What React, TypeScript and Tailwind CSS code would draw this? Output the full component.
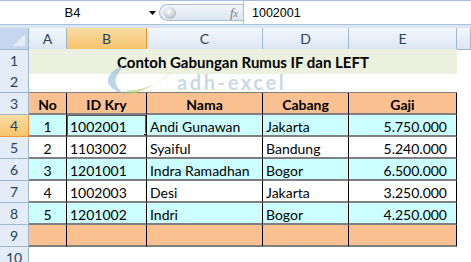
import React from 'react';

const rows = [
  { no: '1', id: '1002001', nama: 'Andi Gunawan', cabang: 'Jakarta', gaji: '5.750.000', bg: 'bg-[#ccffff]' },
  { no: '2', id: '1103002', nama: 'Syaiful', cabang: 'Bandung', gaji: '5.240.000', bg: 'bg-white' },
  { no: '3', id: '1201001', nama: 'Indra Ramadhan', cabang: 'Bogor', gaji: '6.500.000', bg: 'bg-[#ccffff]' },
  { no: '4', id: '1002003', nama: 'Desi', cabang: 'Jakarta', gaji: '3.250.000', bg: 'bg-white' },
  { no: '5', id: '1201002', nama: 'Indri', cabang: 'Bogor', gaji: '4.250.000', bg: 'bg-[#ccffff]' },
];

const gridCols = 'grid grid-cols-[29px_38px_80px_116px_86px_108px_1fr]';

function RowHead({ n, active }: { n: number; active?: boolean }) {
  return (
    <div
      className={
        active
          ? 'flex items-center justify-center border-r border-b border-[#f29536] bg-linear-to-b from-[#f9dca4] to-[#f5c46c] text-[14px] text-[#27415f]'
          : 'flex items-center justify-center border-r border-b border-[#9eb6ce] bg-[#e4ecf7] text-[14px] text-[#27415f]'
      }
    >
      {n}
    </div>
  );
}

function FormulaBar() {
  return (
    <div className="flex h-[28px] flex-col">
      <div className="flex h-[24px] border-t border-[#a9c0dc] bg-white">
        <div className="flex w-[145px] items-center justify-center pt-px font-['Liberation_Sans',sans-serif] text-[13px] text-black">
          B4
        </div>
        <div className="flex w-[14px] items-center justify-center">
          <svg width="7" height="4" viewBox="0 0 7 4">
            <path d="M0 0h7L3.5 4z" fill="#000" />
          </svg>
        </div>
        <div className="my-[3px] flex w-[84px] items-center justify-between rounded-l-full border border-r-0 border-[#a9bfd6] bg-linear-to-b from-[#f2f6fb] to-[#dbe5f1] pl-[4px] pr-[5px]">
          <div className="h-[12px] w-[12px] rounded-full bg-[radial-gradient(circle_at_40%_35%,#ffffff,#b8bec6_70%)]" />
          <span className="font-['Liberation_Serif',serif] text-[13px] italic text-[#7a7a7a]">
            f<span className="text-[10px]">x</span>
          </span>
        </div>
        <div className="flex flex-1 items-center border-l border-[#a9bfd6] pl-[8px] pt-px font-['Liberation_Sans',sans-serif] text-[12.5px] text-black">
          1002001
        </div>
      </div>
      <div className="h-[4px] border-t border-[#a9c0dc] bg-[#dbe6f4]" />
    </div>
  );
}

function ColumnHeaders() {
  const head = 'flex items-center justify-center border-r border-b border-[#9eb6ce] bg-linear-to-b from-[#f3f7fc] to-[#dce6f3] text-[14px] text-[#27415f]';
  return (
    <div className={`${gridCols} h-[21px]`}>
      <div className="relative border-r border-b border-[#9eb6ce] bg-[#c5d7ee]">
        <svg className="absolute right-[3px] bottom-[3px]" width="12" height="12" viewBox="0 0 12 12">
          <path d="M12 0V12H0z" fill="#e3ecf7" />
        </svg>
      </div>
      <div className={head}>A</div>
      <div className="flex items-center justify-center border-r border-b border-[#f29536] bg-linear-to-b from-[#f9dca4] to-[#f5c46c] text-[14px] text-[#27415f]">
        B
      </div>
      <div className={head}>C</div>
      <div className={head}>D</div>
      <div className={head}>E</div>
      <div className={head} />
    </div>
  );
}

function Watermark() {
  // logo adh-excel, samar di atas sel
  return (
    <div className="pointer-events-none absolute left-[100px] top-[62px] h-[34px] w-[200px]">
      <svg className="absolute left-0 top-0" width="80" height="34" viewBox="0 0 80 34">
        <path d="M24 3 C12 8 4 16 10 24 C14 29 20 31 24 32 C18 27 14 22 16 16 C18 10 22 6 24 3z" fill="#8fb7dc" opacity="0.6" />
        <path d="M22 32 C36 34 52 26 74 8 C60 22 44 28 30 28 C27 29 24 30 22 32z" fill="#b4cf7e" opacity="0.6" />
      </svg>
      <span className="absolute left-[77px] top-[10px] font-['Lato',sans-serif] text-[20px] font-bold leading-none tracking-[2.6px] text-[#c4d5e6] opacity-90">
        adh-excel
      </span>
    </div>
  );
}

export default function App() {
  const tcell = 'flex items-center overflow-hidden whitespace-nowrap border-r border-b-2 border-r-black border-b-[#7f7f7f] px-[3px] pt-[2px]';
  return (
    <div className="relative h-[262px] w-[471px] overflow-hidden bg-white font-['Lato',sans-serif] text-[14px] text-black">
      <FormulaBar />
      <ColumnHeaders />

      {/* row 1: judul */}
      <div className={`${gridCols} h-[22px]`}>
        <RowHead n={1} />
        <div className="col-span-5 flex items-center justify-center bg-[#ebf1de] pt-[2px] text-[15px] font-bold">
          Contoh Gabungan Rumus IF dan LEFT
        </div>
        <div />
      </div>

      {/* row 2 */}
      <div className={`${gridCols} h-[22px]`}>
        <RowHead n={2} />
        <div className="col-span-5 border-b border-[#7f7f7f]" />
        <div />
      </div>

      {/* row 3: header tabel */}
      <div className={`${gridCols} h-[22px]`}>
        <RowHead n={3} />
        <div className={`${tcell} justify-center bg-[#fac090] font-bold`}>No</div>
        <div className={`${tcell} justify-center bg-[#fac090] font-bold`}>ID Kry</div>
        <div className={`${tcell} justify-center bg-[#fac090] font-bold`}>Nama</div>
        <div className={`${tcell} justify-center bg-[#fac090] font-bold`}>Cabang</div>
        <div className={`${tcell} justify-center bg-[#fac090] font-bold`}>Gaji</div>
        <div />
      </div>

      {rows.map((r, i) => (
        <div key={r.no} className={`${gridCols} h-[22px]`}>
          <RowHead n={i + 4} active={i === 0} />
          <div className={`${tcell} justify-center ${r.bg}`}>{r.no}</div>
          <div className={`${tcell} relative ${r.bg}`}>
            {r.id}
            {i === 0 && (
              <div className="absolute -top-[1px] -left-[1px] -right-[1px] -bottom-[2px] border-2 border-[#5a5a5a]">
                <div className="absolute -right-[4px] -bottom-[4px] h-[6px] w-[6px] border border-white bg-black" />
              </div>
            )}
          </div>
          <div className={`${tcell} ${r.bg}`}>{r.nama}</div>
          <div className={`${tcell} ${r.bg}`}>{r.cabang}</div>
          <div className={`${tcell} justify-end pr-[9px] ${r.bg}`}>{r.gaji}</div>
          <div />
        </div>
      ))}

      {/* row 9 */}
      <div className={`${gridCols} h-[22px]`}>
        <RowHead n={9} />
        <div className={`${tcell} bg-[#fac090]`} />
        <div className={`${tcell} bg-[#fac090]`} />
        <div className={`${tcell} bg-[#fac090]`} />
        <div className={`${tcell} bg-[#fac090]`} />
        <div className={`${tcell} bg-[#fac090]`} />
        <div />
      </div>

      {/* row 10 */}
      <div className={`${gridCols} h-[22px]`}>
        <RowHead n={10} />
        <div className="col-span-6" />
      </div>

      <Watermark />
    </div>
  );
}
